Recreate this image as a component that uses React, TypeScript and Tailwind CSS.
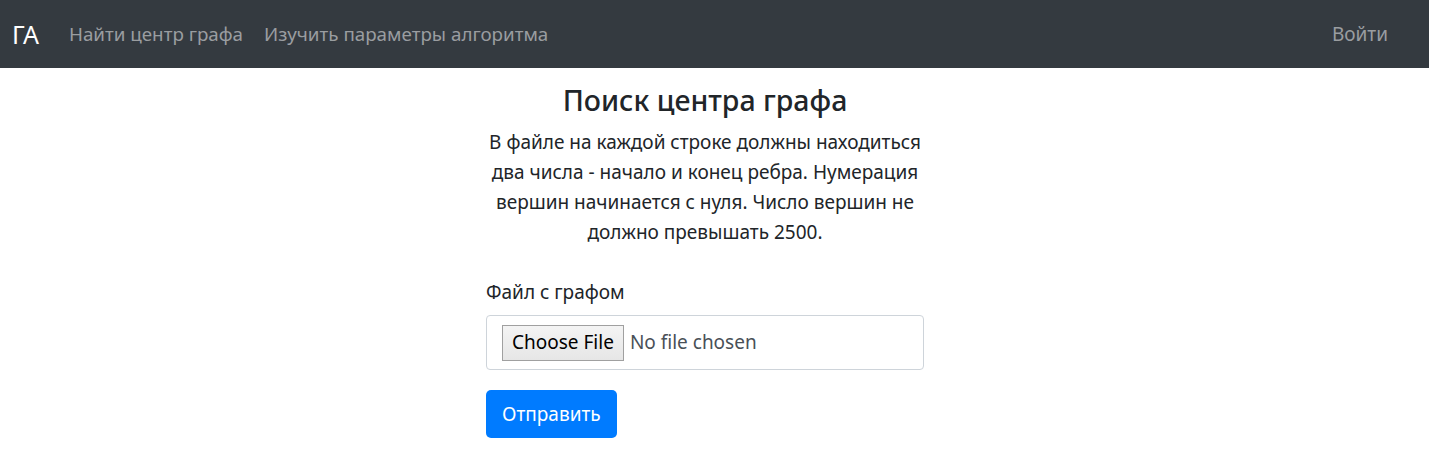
export default function App() {
  return (
    <div className="min-h-screen bg-white text-[#212529]" style={{ fontFamily: '"Noto Sans", "Open Sans", sans-serif' }}>
      <nav className="flex h-[68px] items-center bg-[#343a40] pl-3 pr-[41px]">
        <a href="#" className="mr-[30px] text-[25px] leading-none text-white">
          ГА
        </a>
        <div className="flex items-center gap-[21px] text-[18.8px] text-[#9a9da0]">
          <a href="#">Найти центр графа</a>
          <a href="#">Изучить параметры алгоритма</a>
        </div>
        <a href="#" className="ml-auto text-[19px] text-[#9a9da0]">
          Войти
        </a>
      </nav>

      <main className="flex justify-center pr-[19px]">
        <div className="w-[438px]">
          <h3 className="mt-[12px] text-center text-[28.5px] font-medium leading-[40px]">Поиск центра графа</h3>
          <p className="mt-[7px] text-center text-[19px] leading-[30px]">
            В файле на каждой строке должны находиться два числа - начало и конец ребра. Нумерация вершин
            начинается с нуля. Число вершин не должно превышать 2500.
          </p>

          <form className="mt-[30px]" onSubmit={(e) => e.preventDefault()}>
            <label className="block text-[19px] leading-[30px]">Файл с графом</label>
            <div className="mt-[8px] flex h-[55px] items-center rounded-[4px] border border-[#ced4da] pl-[15px]">
              <span className="flex h-[36px] items-center border border-[#a0a0a0] bg-gradient-to-b from-[#f4f4f4] to-[#e6e6e6] px-[9px] text-[19px] text-black">
                Choose File
              </span>
              <span className="ml-[6px] text-[19px] text-[#495057]">No file chosen</span>
            </div>
            <button
              type="submit"
              className="mt-[20px] h-[48px] rounded-[5px] bg-[#007bff] px-[16px] text-[19px] text-white"
            >
              Отправить
            </button>
          </form>
        </div>
      </main>
    </div>
  );
}
